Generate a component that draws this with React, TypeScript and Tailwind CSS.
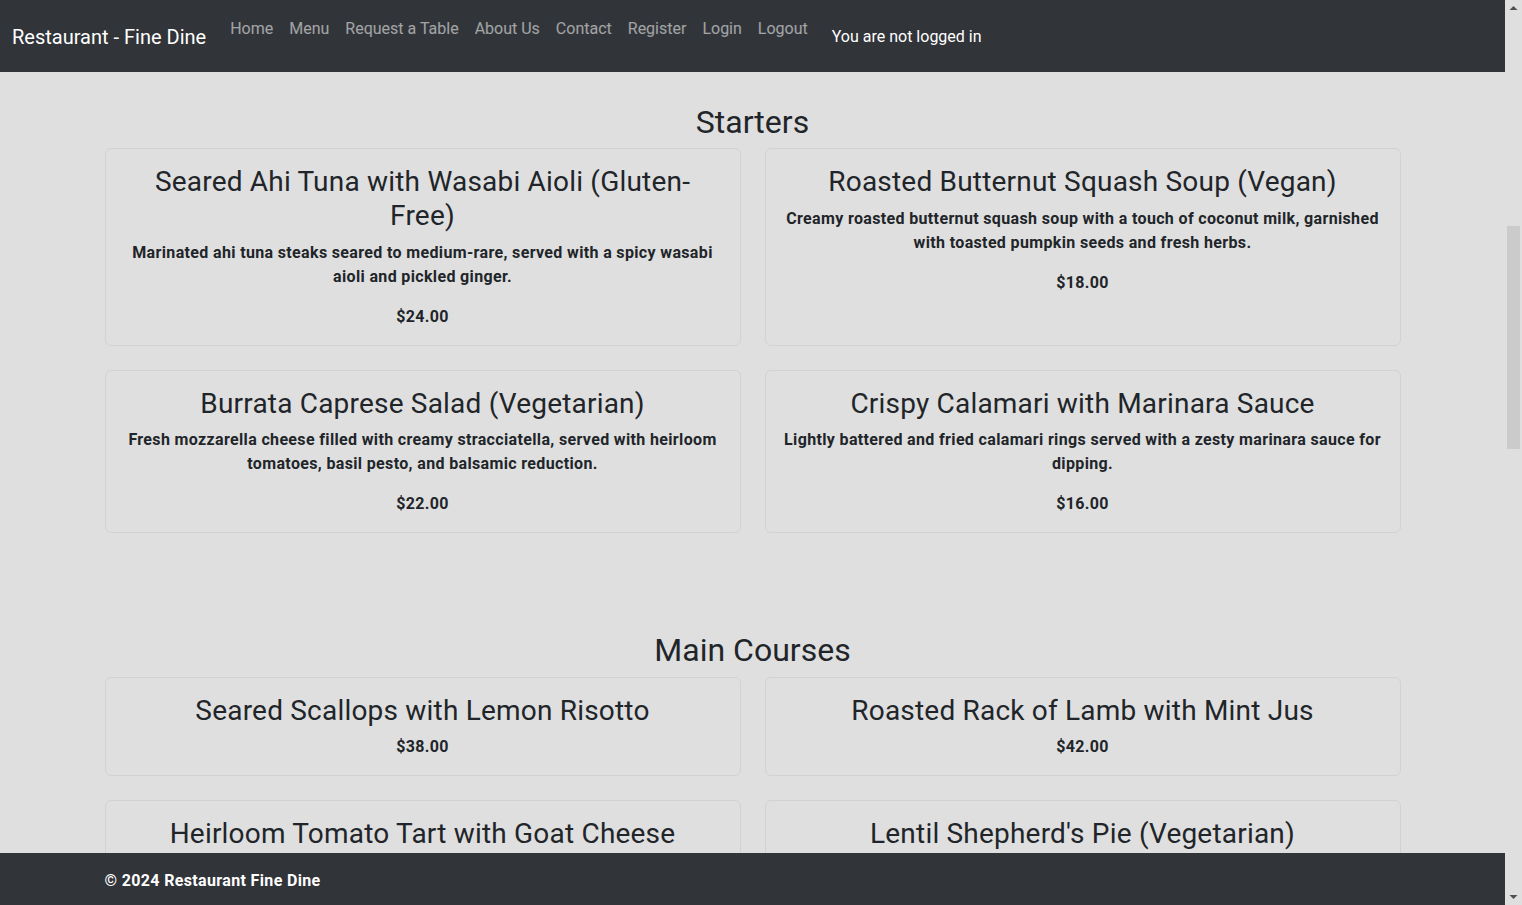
import React from "react";

type Item = { name: string; desc?: string; price: string };

const sections: { title: string; items: Item[] }[] = [
  {
    title: "Starters",
    items: [
      {
        name: "Seared Ahi Tuna with Wasabi Aioli (Gluten-Free)",
        desc: "Marinated ahi tuna steaks seared to medium-rare, served with a spicy wasabi aioli and pickled ginger.",
        price: "$24.00",
      },
      {
        name: "Roasted Butternut Squash Soup (Vegan)",
        desc: "Creamy roasted butternut squash soup with a touch of coconut milk, garnished with toasted pumpkin seeds and fresh herbs.",
        price: "$18.00",
      },
      {
        name: "Burrata Caprese Salad (Vegetarian)",
        desc: "Fresh mozzarella cheese filled with creamy stracciatella, served with heirloom tomatoes, basil pesto, and balsamic reduction.",
        price: "$22.00",
      },
      {
        name: "Crispy Calamari with Marinara Sauce",
        desc: "Lightly battered and fried calamari rings served with a zesty marinara sauce for dipping.",
        price: "$16.00",
      },
    ],
  },
  {
    title: "Main Courses",
    items: [
      { name: "Seared Scallops with Lemon Risotto", price: "$38.00" },
      { name: "Roasted Rack of Lamb with Mint Jus", price: "$42.00" },
      { name: "Heirloom Tomato Tart with Goat Cheese", price: "$28.00" },
      { name: "Lentil Shepherd's Pie (Vegetarian)", price: "$26.00" },
    ],
  },
  {
    title: "Desserts",
    items: [
      {
        name: "Chocolate Lava Cake",
        desc: "Warm chocolate cake with a molten center, served with vanilla bean ice cream.",
        price: "$12.00",
      },
      {
        name: "Classic Crème Brûlée",
        desc: "Rich vanilla custard topped with a layer of caramelized sugar.",
        price: "$11.00",
      },
      {
        name: "Lemon Tart (Gluten-Free)",
        desc: "Tangy lemon curd in an almond crust, finished with fresh berries.",
        price: "$10.00",
      },
      {
        name: "Seasonal Fruit Sorbet (Vegan)",
        desc: "A trio of refreshing sorbets made from seasonal fruits.",
        price: "$9.00",
      },
    ],
  },
];

const navLinks = ["Home", "Menu", "Request a Table", "About Us", "Contact", "Register", "Login", "Logout"];

function Card({ item }: { item: Item }) {
  return (
    <div className="mb-6 rounded-md border border-[#d2d2d2] p-4 text-center">
      <h3 className="mx-auto mb-2 max-w-[580px] text-[28px] leading-[1.2] font-normal tracking-[0.2px] text-[#212529]">
        {item.name}
      </h3>
      {item.desc && (
        <p className="mb-4 text-base leading-6 font-bold tracking-[0.35px] text-[#212529]">{item.desc}</p>
      )}
      <p className="text-base leading-6 font-bold tracking-[0.35px] text-[#212529]">{item.price}</p>
    </div>
  );
}

function Scrollbar() {
  return (
    <div className="flex h-[905px] w-[17px] shrink-0 flex-col bg-[#dfdfdf]">
      <svg width="17" height="17" viewBox="0 0 17 17" className="shrink-0">
        <polygon points="4.5,10 12.5,10 8.5,6" fill="#505050" />
      </svg>
      <div className="flex-1">
        <div className="mx-[2px] mt-[209px] h-[223px] bg-[#cbcbcb]" />
      </div>
      <svg width="17" height="17" viewBox="0 0 17 17" className="shrink-0">
        <polygon points="4.5,7 12.5,7 8.5,11" fill="#505050" />
      </svg>
    </div>
  );
}

export default function App() {
  return (
    <div className="flex h-[905px] overflow-hidden bg-[#dfdfdf] font-[Roboto,sans-serif] text-[#212529]">
      <div className="h-[905px] min-w-0 flex-1 overflow-y-auto">
        <nav className="sticky top-0 z-10 flex h-[72px] items-center bg-[#313439] px-3 pt-[9px] pb-[7px]">
          <a className="mr-4 py-[5px] text-xl leading-[30px] text-white">Restaurant - Fine Dine</a>
          <ul className="mb-4 flex">
            {navLinks.map((l) => (
              <li key={l}>
                <a className="block px-2 py-2 text-base leading-6 text-white/55">{l}</a>
              </li>
            ))}
          </ul>
          <span className="ml-4 text-base leading-6 text-white">You are not logged in</span>
        </nav>

        <main className="mx-auto max-w-[1320px] px-3 pt-[31px] pb-6">
          {sections.map((s, i) => (
            <section key={s.title} className={i === 0 ? "" : "mt-[74px]"}>
              <h2 className="mb-[7px] text-center text-[32px] leading-[1.2] font-normal text-[#212529]">{s.title}</h2>
              <div className="grid grid-cols-2 gap-x-6">
                {s.items.map((it) => (
                  <Card key={it.name} item={it} />
                ))}
              </div>
            </section>
          ))}
        </main>

        <footer className="sticky bottom-0 z-10 h-[52px] bg-[#313439] pt-4">
          <div className="mx-auto max-w-[1320px] px-3">
            <p className="text-base leading-6 font-bold tracking-[0.35px] text-white">© 2024 Restaurant Fine Dine</p>
          </div>
        </footer>
      </div>
      <Scrollbar />
    </div>
  );
}
